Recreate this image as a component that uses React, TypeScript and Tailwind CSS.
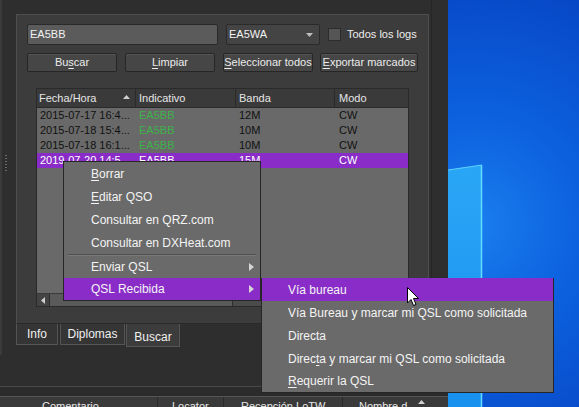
import React from 'react';

const rows = [
  { date: '2015-07-17 16:4...', call: 'EA5BB', band: '12M', mode: 'CW' },
  { date: '2015-07-18 15:4...', call: 'EA5BB', band: '10M', mode: 'CW' },
  { date: '2015-07-18 16:1...', call: 'EA5BB', band: '10M', mode: 'CW' },
];

const U: React.FC<{ children: React.ReactNode }> = ({ children }) => (
  <span className="underline underline-offset-2">{children}</span>
);

const Arrow: React.FC = () => (
  <svg width="5" height="8" viewBox="0 0 5 8" className="absolute right-[6px] top-1/2 -translate-y-1/2">
    <path d="M0 0 L5 4 L0 8 Z" fill="#d6d6d6" />
  </svg>
);

const Btn: React.FC<{ w: string; children: React.ReactNode }> = ({ w, children }) => (
  <div
    className={`${w} h-[19px] flex items-center justify-center rounded-[2px] border border-[#262626] bg-[#464646] text-[#ececec] text-[11px] shadow-[inset_0_1px_0_#555]`}
  >
    {children}
  </div>
);

export default function App() {
  return (
    <div
      className="relative w-[579px] h-[407px] overflow-hidden flex select-none"
      style={{ fontFamily: '"Liberation Sans", Arial, sans-serif' }}
    >
      {/* application window */}
      <div className="w-[448px] h-full bg-[#2e2e2e] flex flex-col shrink-0">
        <div className="flex h-[347px]">
          {/* left splitter strip */}
          <div className="w-[16px] flex">
            <div className="w-[2px] h-[355px] bg-[#3a3a3a]" />
            <div className="flex flex-col gap-[2px] pt-[155px] pl-[3px]">
              {Array.from({ length: 6 }).map((_, i) => (
                <div key={i} className="w-[2px] h-[1px] bg-[#6a6a6a]" />
              ))}
            </div>
          </div>

          <div className="flex flex-col pt-[14px]">
            {/* tab page */}
            <div className="w-[413px] h-[311px] bg-[#3c3c3c] border border-[#4e4e4e] border-b-[#2a2a2a] pl-[10px] pt-[9px] flex flex-col">
              <div className="flex items-center h-[21px]">
                <div className="w-[191px] h-[21px] rounded-[2px] bg-[#5b5b5b] border border-[#2a2a2a] flex items-center pl-[2px] text-[11px] text-[#f2f2f2]">
                  EA5BB
                </div>
                <div className="ml-[8px] w-[94px] h-[21px] rounded-[2px] bg-[#444] border border-[#2a2a2a] flex items-center pl-[2px] text-[11px] text-[#f2f2f2] relative">
                  EA5WA
                  <svg width="7" height="4" viewBox="0 0 7 4" className="absolute right-[6px] top-[8px]">
                    <path d="M0 0 L7 0 L3.5 4 Z" fill="#bdbdbd" />
                  </svg>
                </div>
                <div className="ml-[8px] w-[13px] h-[13px] bg-[#555] border border-[#2c2c2c]" />
                <span className="ml-[6px] text-[11px] text-[#ededed]">Todos los logs</span>
              </div>

              <div className="flex items-center mt-[8px] gap-[8px]">
                <Btn w="w-[90px]">
                  Bu<U>s</U>car
                </Btn>
                <Btn w="w-[90px]">
                  <U>L</U>impiar
                </Btn>
                <Btn w="w-[90px]">
                  <U>S</U>eleccionar todos
                </Btn>
                <div className="-ml-px">
                  <Btn w="w-[98px]">
                    <U>E</U>xportar marcados
                  </Btn>
                </div>
              </div>

              {/* table */}
              <div className="ml-[9px] mt-[16px] w-[373px] h-[219px] border border-[#2a2a2a] bg-[#696969] flex flex-col text-[11px]">
                <div className="flex h-[19px] bg-[#3a3a3a] text-[#e6e6e6] border-b border-[#2a2a2a]">
                  <div className="w-[99px] border-r border-[#2a2a2a] pl-[2px] flex items-center relative">
                    Fecha/Hora
                    <svg width="7" height="4" viewBox="0 0 7 4" className="absolute right-[5px] top-[6px]">
                      <path d="M0 4 L7 4 L3.5 0 Z" fill="#d0d0d0" />
                    </svg>
                  </div>
                  <div className="w-[100px] border-r border-[#2a2a2a] pl-[3px] flex items-center">Indicativo</div>
                  <div className="w-[99px] border-r border-[#2a2a2a] pl-[3px] flex items-center">Banda</div>
                  <div className="flex-1 pl-[4px] flex items-center">Modo</div>
                </div>
                <div className="flex-1 flex flex-col">
                  {rows.map((r) => (
                    <div key={r.date} className="flex h-[15px] items-center text-[#111]">
                      <div className="w-[99px] pl-[3px]">{r.date}</div>
                      <div className="w-[100px] pl-[3px] text-[#3cb34a]">{r.call}</div>
                      <div className="w-[99px] pl-[3px]">{r.band}</div>
                      <div className="flex-1 pl-[4px]">{r.mode}</div>
                    </div>
                  ))}
                  <div className="flex h-[15px] items-center bg-[#8a2dc8] text-white">
                    <div className="w-[99px] pl-[3px]">2019-07-20 14:5</div>
                    <div className="w-[100px] pl-[3px]">EA5BB</div>
                    <div className="w-[99px] pl-[3px]">15M</div>
                    <div className="flex-1 pl-[4px]">CW</div>
                  </div>
                </div>
                {/* horizontal scrollbar */}
                <div className="h-[13px] flex bg-[#4b4b4b] border-t border-[#3a3a3a]">
                  <div className="w-[13px] h-full bg-[#444] border-r border-[#2e2e2e] flex items-center justify-center">
                    <svg width="4" height="7" viewBox="0 0 4 7">
                      <path d="M4 0 L0 3.5 L4 7 Z" fill="#cfcfcf" />
                    </svg>
                  </div>
                  <div className="w-[183px] h-full bg-[#5a5a5a] border-r border-[#2e2e2e]" />
                </div>
              </div>
            </div>

            {/* tabs */}
            <div className="flex items-start gap-[2px] text-[12px] text-[#f0f0f0]">
              <div className="w-[42px] h-[21px] bg-[#353535] border border-t-0 border-[#555] flex items-center justify-center">
                Info
              </div>
              <div className="w-[65px] h-[21px] bg-[#353535] border border-t-0 border-[#555] flex items-center justify-center">
                Diplomas
              </div>
              <div className="-ml-px w-[54px] h-[23px] bg-[#3c3c3c] border border-t-0 border-[#555] flex items-center justify-center pt-[3px]">
                Buscar
              </div>
            </div>
          </div>

          <div className="ml-[2px] w-[1px] h-[325px] bg-[#262626]" />
        </div>

        <div className="flex-1" />
        <div className="h-[1px] bg-[#4a4a4a]" />
        <div className="h-[9px] bg-[#2b2b2b]" />
        <div className="h-[11px] flex bg-[#3a3a3a] border-t border-[#555] text-[11px] text-[#e8e8e8] overflow-visible">
          <div className="w-[158px] border-r border-[#2a2a2a] pl-[42px] pt-[4px] leading-none">Comentario</div>
          <div className="w-[66px] border-r border-[#2a2a2a] pl-[14px] pt-[4px] leading-none">Locator</div>
          <div className="w-[119px] border-r border-[#2a2a2a] pl-[17px] pt-[4px] leading-none">Recepción LoTW</div>
          <div className="w-[94px] pl-[16px] pt-[4px] leading-none relative">
            Nombre d
            <svg width="7" height="4" viewBox="0 0 7 4" className="absolute right-[12px] top-[3px]">
              <path d="M0 4 L7 4 L3.5 0 Z" fill="#d0d0d0" />
            </svg>
          </div>
        </div>
      </div>

      {/* desktop */}
      <div className="flex-1 h-full bg-[radial-gradient(circle_at_20%_55%,#1a7eee_0%,#0c60de_45%,#0747c6_100%)]">
        <svg width="131" height="407" viewBox="0 0 131 407">
          <defs>
            <linearGradient id="pane" x1="0" y1="0" x2="0" y2="1">
              <stop offset="0" stopColor="#2aa6f6" />
              <stop offset="1" stopColor="#1890ee" />
            </linearGradient>
          </defs>
          <path d="M0 170 L34 165 L34 407 L0 407 Z" fill="url(#pane)" />
          <path d="M0 170 L34 165" stroke="#5fd0ff" strokeWidth="1.2" />
          <path d="M33.5 165 L33.5 407" stroke="#63dcff" strokeWidth="1.5" />
        </svg>
      </div>

      {/* context menu */}
      <div className="absolute left-[63px] top-[161px] w-[198px] h-[140px] bg-[#6a6a6a] border border-[#262626] text-[12px] text-[#f4f4f4] flex flex-col">
        <div className="h-[23px] flex items-center pl-[27px]">
          <U>B</U>orrar
        </div>
        <div className="h-[23px] flex items-center pl-[27px]">
          <U>E</U>ditar QSO
        </div>
        <div className="h-[23px] flex items-center pl-[27px]">Consultar en QRZ.com</div>
        <div className="h-[23px] flex items-center pl-[27px]">Consultar en DXHeat.com</div>
        <div className="h-[2px] mx-[4px] border-t border-[#4e4e4e] border-b border-b-[#7a7a7a]" />
        <div className="h-[22px] flex items-center pl-[27px] relative">
          Enviar QSL
          <Arrow />
        </div>
        <div className="h-[22px] flex items-center pl-[27px] relative bg-[#8a2dc8]">
          QSL Recibida
          <Arrow />
        </div>
      </div>

      {/* submenu */}
      <div className="absolute left-[261px] top-[278px] w-[293px] h-[115px] bg-[#6a6a6a] border border-[#262626] border-t-0 text-[12px] text-[#f4f4f4] flex flex-col">
        <div className="h-[23px] flex items-center pl-[26px] bg-[#8a2dc8]">Vía bureau</div>
        <div className="h-[23px] flex items-center pl-[26px]">Vía Bureau y marcar mi QSL como solicitada</div>
        <div className="h-[23px] flex items-center pl-[26px]">Directa</div>
        <div className="h-[23px] flex items-center pl-[26px]">
          Direc<U>t</U>a y marcar mi QSL como solicitada
        </div>
        <div className="h-[22px] flex items-center pl-[26px]">
          <U>R</U>equerir la QSL
        </div>
      </div>

      {/* mouse cursor */}
      <svg width="13" height="20" viewBox="0 0 13 20" className="absolute left-[407px] top-[287px]">
        <path d="M0.5 0.5 L0.5 16 L4 12.5 L6.5 18.5 L9 17.5 L6.5 11.5 L11.5 11.5 Z" fill="#fff" stroke="#000" strokeWidth="1" />
      </svg>
    </div>
  );
}
